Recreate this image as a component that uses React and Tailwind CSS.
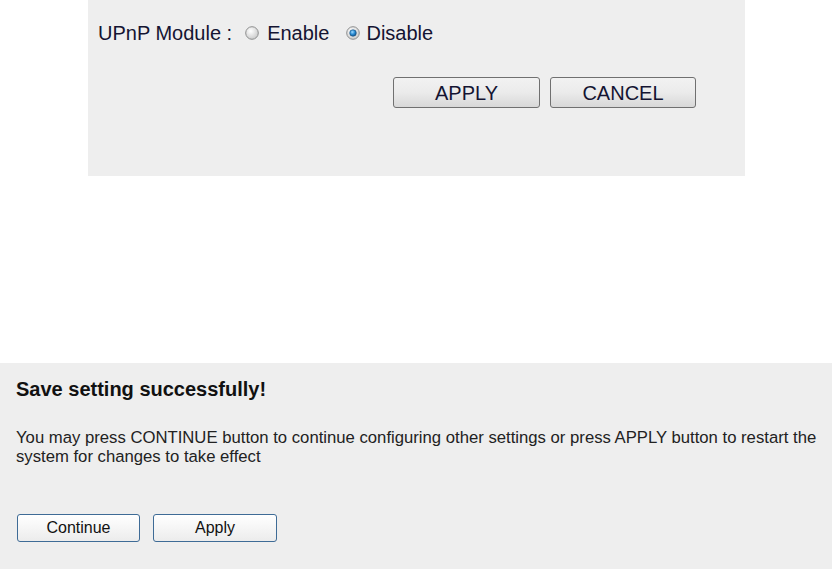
import React from "react";

function Radio({ checked }) {
  return (
    <svg width="14" height="14" viewBox="0 0 14 14" className="inline-block">
      <defs>
        <radialGradient id={checked ? "rgc" : "rgu"} cx="0.4" cy="0.35" r="0.7">
          <stop offset="0" stopColor="#ffffff" />
          <stop offset="1" stopColor="#c8c8c8" />
        </radialGradient>
        <radialGradient id="dot" cx="0.4" cy="0.35" r="0.7">
          <stop offset="0" stopColor="#9fd8ff" />
          <stop offset="0.5" stopColor="#2c8fd6" />
          <stop offset="1" stopColor="#0c4f8a" />
        </radialGradient>
      </defs>
      <circle cx="7" cy="7" r="6.3" fill={`url(#${checked ? "rgc" : "rgu"})`} stroke="#8e8f8f" strokeWidth="1" />
      {checked && <circle cx="7" cy="7" r="3.3" fill="url(#dot)" stroke="#1b4f7a" strokeWidth="0.6" />}
    </svg>
  );
}

export default function App() {
  return (
    <div className="w-[832px] h-[569px] bg-white flex flex-col text-[#111]" style={{ fontFamily: '"Liberation Sans", Arial, sans-serif' }}>
      <div className="ml-[88px] w-[657px] h-[176px] bg-[#eeeeee] flex flex-col">
        <div className="pt-[21px] pl-[10px] flex items-center text-[20px] leading-[24px] text-[#141432]">
          <span>UPnP Module :</span>
          <span className="ml-[13px] flex items-center"><Radio checked={false} /></span>
          <span className="ml-[8px]">Enable</span>
          <span className="ml-[17px] flex items-center"><Radio checked={true} /></span>
          <span className="ml-[6px]">Disable</span>
        </div>
        <div className="pl-[305px] mt-[32px] flex gap-[10px]">
          <button className="w-[147px] h-[31px] rounded-[3px] border border-[#707070] bg-gradient-to-b from-[#f2f2f2] via-[#ebebeb] to-[#d8d8d8] text-[20px] leading-none text-[#141432]">APPLY</button>
          <button className="w-[146px] h-[31px] rounded-[3px] border border-[#707070] bg-gradient-to-b from-[#f2f2f2] via-[#ebebeb] to-[#d8d8d8] text-[20px] leading-none text-[#141432]">CANCEL</button>
        </div>
      </div>
      <div className="mt-[187px] w-[832px] h-[206px] bg-[#eeeeee] flex flex-col pl-[16px] pt-[14px]">
        <div className="text-[20px] leading-[24px] font-bold">Save setting successfully!</div>
        <div className="mt-[27px] text-[16.7px] leading-[19px] text-[#222]">
          You may press CONTINUE button to continue configuring other settings or press APPLY button to restart the<br />
          system for changes to take effect
        </div>
        <div className="mt-[48px] flex gap-[13px] pl-[1px]">
          <button className="w-[123px] h-[28px] rounded-[3px] border border-[#3e6b96] bg-gradient-to-b from-[#ffffff] to-[#ececec] text-[16px] leading-none text-[#111]">Continue</button>
          <button className="w-[124px] h-[28px] rounded-[3px] border border-[#3e6b96] bg-gradient-to-b from-[#ffffff] to-[#ececec] text-[16px] leading-none text-[#111]">Apply</button>
        </div>
      </div>
    </div>
  );
}
